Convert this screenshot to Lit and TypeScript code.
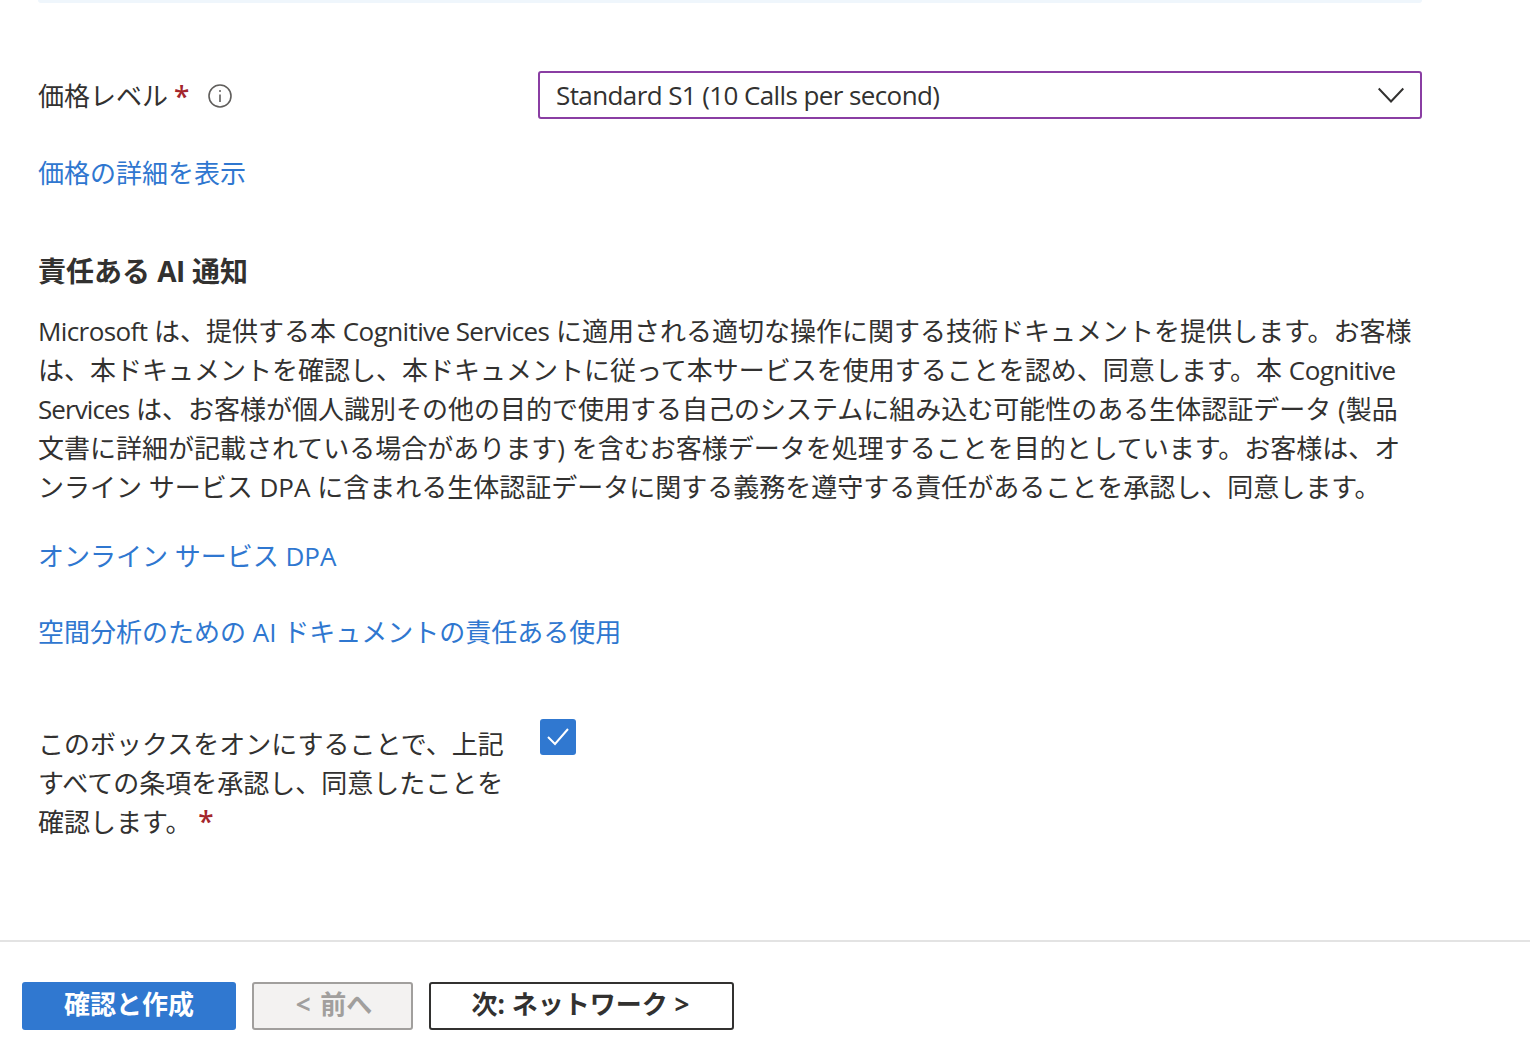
import { LitElement, html, css } from "lit";
import { customElement } from "lit/decorators.js";

@customElement("app-root")
export class AppRoot extends LitElement {
  static styles = css`
    :host {
      display: flex;
      flex-direction: column;
      height: 1048px;
      overflow: hidden;
      background: #fff;
      color: #323130;
      font-family: "Open Sans", "Noto Sans CJK JP", sans-serif;
      font-size: 26px;
      line-height: 39px;
    }
    .main { flex: none; height: 940px; padding: 0 108px 0 38px; box-sizing: border-box; }
    .strip { height: 3px; background: #eff6fc; border-radius: 0 0 6px 6px; }
    .row { display: flex; align-items: center; margin-top: 68px; height: 48px; }
    .label { width: 500px; display: flex; align-items: center; padding-top: 2px; }
    .star { color: #a4262c; margin-left: 6px; font-family: "Noto Sans", sans-serif; font-weight: 500; font-size: 28px; line-height: 0; }
    .check-text .star { margin-left: 0; }
    .info { margin-left: 18px; display: block; }
    .select {
      flex: 1; height: 48px; box-sizing: border-box;
      border: 2px solid #8a3ea3; border-radius: 3px;
      padding: 0 16px; display: flex; align-items: center; justify-content: space-between;
    }
    .lat { letter-spacing: -0.6px; }
    .tight { letter-spacing: -0.9px; }
    a { color: #2f77d0; text-decoration: none; display: block; }
    .price { margin-top: 35px; }
    h2 { margin: 59px 0 0; font-size: 28px; line-height: 39px; font-weight: 700; }
    p { margin: 21px 0 0; white-space: nowrap; }
    .l1 { margin-top: 30px; }
    .l2 { margin-top: 37px; }
    .check { display: flex; margin-top: 67px; }
    .check-text { width: 502px; padding-top: 6px; }
    .box {
      width: 36px; height: 36px; border-radius: 3px; background: #3078d0;
      display: flex; align-items: center; justify-content: center;
    }
    footer {
      flex: 1; border-top: 2px solid #e3e3e3; padding: 40px 22px 0;
      display: flex; gap: 16px; align-items: flex-start;
    }
    button {
      font: 700 26px/39px "Open Sans", "Noto Sans CJK JP", sans-serif;
      height: 48px; border-radius: 3px; box-sizing: border-box; padding: 0 0 4px;
    }
    .primary { width: 214px; background: #3078d0; color: #fff; border: 0; }
    .prev { width: 161px; background: #f3f2f1; color: #a19f9d; border: 2px solid #a19f9d; word-spacing: 3px; padding-left: 3px; }
    .next { width: 305px; background: #fff; color: #323130; border: 2px solid #323130; padding-right: 2px; }
  `;

  render() {
    return html`
      <div class="main">
        <div class="strip"></div>
        <div class="row">
          <div class="label">
            価格レベル<span class="star">*</span>
            <svg class="info" width="26" height="26" viewBox="0 0 26 26" fill="none" stroke="#605e5c" stroke-width="1.6">
              <circle cx="13" cy="13" r="11"></circle>
              <path d="M13 11.5v7.5"></path>
              <circle cx="13" cy="8" r="1" fill="#605e5c" stroke="none"></circle>
            </svg>
          </div>
          <div class="select">
            <span class="lat">Standard S1 (10 Calls per second)</span>
            <svg width="26" height="16" viewBox="0 0 26 16" fill="none" stroke="#323130" stroke-width="2">
              <path d="M.7 1.500L13 14.500 25.300 1.500"></path>
            </svg>
          </div>
        </div>
        <a class="price" href="#">価格の詳細を表示</a>
        <h2>責任ある <span class="lat">AI</span> 通知</h2>
        <p><span class="lat">Microsoft</span> は、提供する本 <span class="lat">Cognitive Services</span> に適用される適切な操作に関する技術ドキュメントを提供します。お客様<br />は、本ドキュメントを確認し、本ドキュメントに従って本サービスを使用することを認め、同意します。本 <span class="lat">Cognitive</span><br /><span class="tight">Services</span> は、お客様が個人識別その他の目的で使用する自己のシステムに組み込む可能性のある生体認証データ (製品<br />文書に詳細が記載されている場合があります) を含むお客様データを処理することを目的としています。お客様は、オ<br />ンライン サービス DPA に含まれる生体認証データに関する義務を遵守する責任があることを承認し、同意します。</p>
        <a class="l1" href="#">オンライン サービス DPA</a>
        <a class="l2" href="#">空間分析のための AI ドキュメントの責任ある使用</a>
        <div class="check">
          <div class="check-text">このボックスをオンにすることで、上記<br />すべての条項を承認し、同意したことを<br />確認します。 <span class="star">*</span></div>
          <div class="box">
            <svg width="24" height="20" viewBox="0 0 24 20" fill="none" stroke="#fff" stroke-width="2"><path d="M2 10l7 7L22 2"></path></svg>
          </div>
        </div>
      </div>
      <footer>
        <button class="primary">確認と作成</button>
        <button class="prev">&lt; 前へ</button>
        <button class="next">次: ネットワーク &gt;</button>
      </footer>
    `;
  }
}
